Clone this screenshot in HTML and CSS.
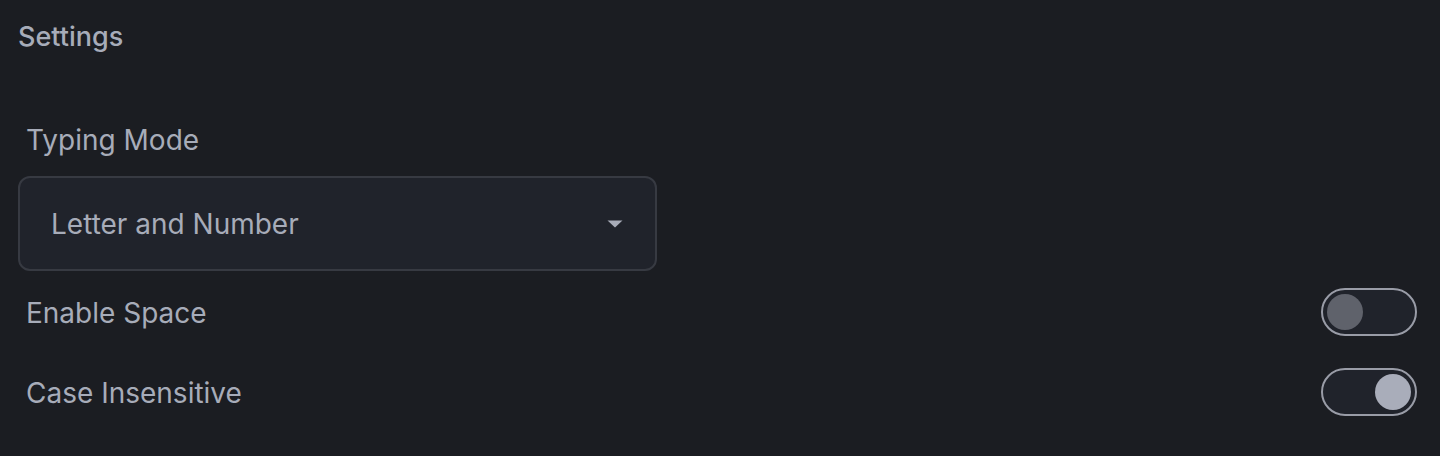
FILE: index.html
```html
<!DOCTYPE html>
<html lang="en">
<head>
    <meta charset="UTF-8">
    <meta name="viewport" content="width=device-width, initial-scale=1.0">
    <title>Settings</title>
    <link rel="stylesheet" href="styles.css">
</head>
<body>
    <div class="settings">
        <h1 class="title">Settings</h1>

        <label class="field-label" for="modo">Typing Mode</label>
        <div class="dropdown">
            <span class="dropdown-value">Letter and Number</span>
            <svg class="dropdown-arrow" width="16" height="8" viewBox="0 0 16 8">
                <path d="M0.5 0.5 L15.5 0.5 L8 7.5 Z" fill="#a8acb8"/>
            </svg>
        </div>

        <div class="row first">
            <span class="row-label">Enable Space</span>
            <button class="toggle" onclick="this.classList.toggle('on')"><span class="knob"></span></button>
        </div>
        <div class="row">
            <span class="row-label">Case Insensitive</span>
            <button class="toggle on" onclick="this.classList.toggle('on')"><span class="knob"></span></button>
        </div>
    </div>
</body>
</html>
```

FILE: styles.css
```css
body {
    font-family: 'Inter', 'Noto Sans', sans-serif;
    background-color: #1b1d22;
    color: #a7acb9;
    margin: 0;
}
.settings {
    padding: 18px 23px 0 18px;
    display: flex;
    flex-direction: column;
}
.title {
    font-size: 27px;
    font-weight: 500;
    line-height: 38px;
    margin: 0;
    color: #a7acb9;
}
.field-label {
    font-size: 28px;
    line-height: 40px;
    margin: 64px 0 16px 8px;
    color: #a7acb9;
}
.dropdown {
    width: 639px;
    height: 95px;
    box-sizing: border-box;
    border: 2px solid #373a42;
    border-radius: 12px;
    background-color: #20232b;
    display: flex;
    align-items: center;
    justify-content: space-between;
    padding: 0 32px 0 31px;
}
.dropdown-value {
    font-size: 28px;
    color: #a7acb9;
}
.row {
    display: flex;
    align-items: center;
    justify-content: space-between;
    height: 80px;
    margin-left: 8px;
}
.row.first {
    margin-top: 2px;
}
.row-label {
    font-size: 28px;
    color: #a7acb9;
}
.toggle {
    width: 96px;
    height: 48px;
    box-sizing: border-box;
    border: 2px solid #999ca7;
    border-radius: 24px;
    background-color: #20232b;
    padding: 0 4px;
    margin-top: -3px;
    display: flex;
    align-items: center;
    cursor: pointer;
}
.knob {
    width: 36px;
    height: 36px;
    border-radius: 50%;
    background-color: #5f626b;
}
.toggle.on {
    justify-content: flex-end;
}
.toggle.on .knob {
    background-color: #a9adba;
}
```
